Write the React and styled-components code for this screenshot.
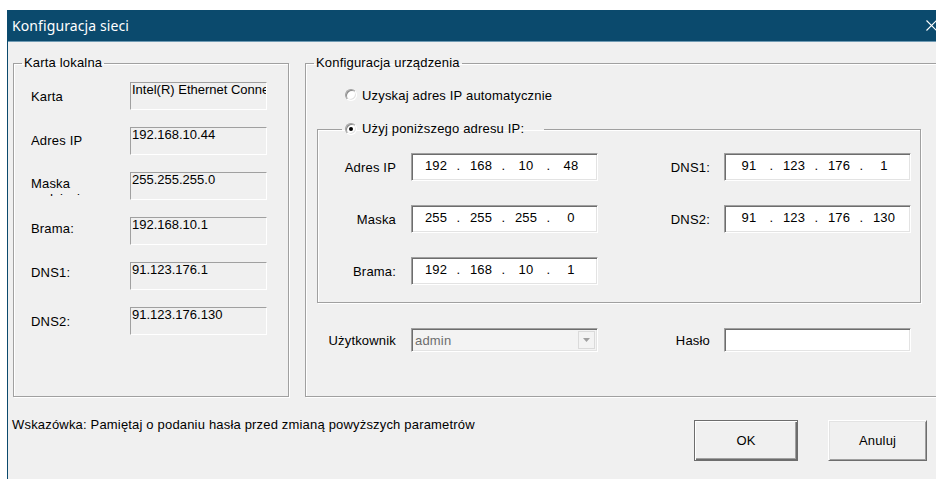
import React from "react";
import styled, { createGlobalStyle } from "styled-components";

const GlobalStyle = createGlobalStyle`
  html, body {
    margin: 0;
    padding: 0;
    background: #ffffff;
    overflow: hidden;
  }
  body {
    font-family: "Liberation Sans", Arial, sans-serif;
    font-size: 13px;
    letter-spacing: 0.18px;
    color: #000;
  }
`;

const Window = styled.div`
  margin: 10px 0 0 7px;
  width: 946px;
  height: 469px;
  border-left: 1px solid #0b4a6d;
  background: #f0f0f0;
  display: flex;
  flex-direction: column;
`;

const TitleBar = styled.div`
  height: 31px;
  flex: none;
  background: #0b4a6d;
  border-bottom: 1px solid #6f9ab3;
  display: flex;
  align-items: center;
  justify-content: space-between;
  padding-left: 4px;
  color: #fff;
`;

const Title = styled.span`
  font-family: "Noto Sans", sans-serif;
  font-size: 14px;
  letter-spacing: 0.1px;
  line-height: 18px;
`;

const CloseButton = styled.div`
  width: 46px;
  height: 31px;
  display: flex;
  align-items: center;
  justify-content: center;
`;

const TopRow = styled.div`
  display: flex;
  gap: 16px;
  padding: 13px 6px 0 5px;
`;

/* etched group frame: grey line with a white highlight beside it */
const GroupBox = styled.fieldset`
  margin: 0;
  padding: 0;
  min-width: 0;
  box-sizing: border-box;
  border: 1px solid #a0a0a0;
  box-shadow: 1px 1px 0 #ffffff, inset 1px 1px 0 #ffffff;
  width: ${(p) => (p.$width ? `${p.$width}px` : "auto")};
  flex: ${(p) => (p.$grow ? "1 1 auto" : "none")};
  margin-left: ${(p) => p.$offset || 0}px;
`;

const Caption = styled.legend`
  margin-left: ${(p) => p.$indent}px;
  padding: 0 ${(p) => p.$padRight}px 0 ${(p) => p.$padLeft}px;
  line-height: 16px;
  display: flex;
  align-items: center;
  gap: 5px;
`;

/* left panel: read-only summary of the local adapter */
const InfoGrid = styled.div`
  display: grid;
  grid-template-columns: 99px 137px;
  grid-auto-rows: 28px;
  row-gap: 17px;
  padding: 11px 0 0 17px;
`;

const InfoLabel = styled.div`
  line-height: 15px;
  margin-top: ${(p) => p.$shift}px;
  height: ${(p) => (p.$clip ? `${p.$clip}px` : "auto")};
  width: 62px;
  overflow: hidden;
`;

const StaticField = styled.div`
  box-sizing: border-box;
  height: 28px;
  background: #f0f0f0;
  border-style: solid;
  border-width: 1px;
  border-color: #a0a0a0 #ffffff #ffffff #a0a0a0;
  padding: 0 0 0 1px;
  line-height: 14px;
  letter-spacing: 0;
  white-space: nowrap;
  overflow: hidden;
`;

/* right panel */
const DeviceBody = styled.div`
  padding: 16px 0 44px 0;
`;

const RadioRow = styled.div`
  display: flex;
  align-items: center;
  gap: 5px;
  height: 16px;
  padding-left: 39px;
  margin-bottom: 18px;
`;

const Radio = styled.span`
  box-sizing: border-box;
  width: 12px;
  height: 12px;
  border-radius: 50%;
  background: #fff;
  border: 1px solid;
  border-color: #a0a0a0 #ffffff #ffffff #a0a0a0;
  box-shadow: inset 1px 1px 0 #8a8a8a, inset -1px -1px 0 #e3e3e3;
  display: inline-flex;
  align-items: center;
  justify-content: center;
  flex: none;

  &::after {
    content: "";
    width: 4px;
    height: 4px;
    border-radius: 50%;
    background: #000;
    display: ${(p) => (p.$checked ? "block" : "none")};
  }
`;

const FormGrid = styled.div`
  display: grid;
  grid-template-columns: 93px 187px 126px 187px;
  grid-auto-rows: ${(p) => p.$rowHeight}px;
  row-gap: 24px;
  padding: ${(p) => p.$pad};
  margin-left: ${(p) => p.$indent || 0}px;
  margin-top: ${(p) => p.$top || 0}px;
`;

const FieldLabel = styled.div`
  display: flex;
  align-items: center;
  justify-content: flex-end;
  padding-right: ${(p) => p.$gap}px;
  padding-top: 1px;
`;

const Sunken = styled.div`
  box-sizing: border-box;
  height: 100%;
  background: ${(p) => (p.$disabled ? "#f3f3f3" : "#ffffff")};
  border-style: solid;
  border-width: 1px;
  border-color: #a0a0a0 #ffffff #ffffff #a0a0a0;
  box-shadow: inset 1px 1px 0 #6d6d6d, inset -1px -1px 0 #e3e3e3;
  display: flex;
  align-items: center;
`;

const IpBox = styled(Sunken)`
  padding: 0 0 3px 4px;
`;

const Octet = styled.span`
  width: 40px;
  text-align: center;
`;

const Dot = styled.span`
  width: 5px;
  text-align: center;
`;

const ComboBox = styled(Sunken)`
  padding-left: 3px;
  color: #6d6d6d;
`;

const DropButton = styled.span`
  margin-left: auto;
  margin-right: 2px;
  width: 17px;
  height: 18px;
  box-sizing: border-box;
  border: 1px solid #dadada;
  background: #f3f3f3;
  display: flex;
  align-items: center;
  justify-content: center;
`;

const Footer = styled.div`
  display: flex;
  align-items: flex-start;
  padding: 0 27px 0 4px;
`;

const Hint = styled.div`
  flex: 1;
  margin-top: 20px;
  line-height: 15px;
`;

const Buttons = styled.div`
  display: flex;
  gap: 30px;
  margin-top: 23px;
`;

const Button = styled.button`
  width: ${(p) => p.$width}px;
  height: 41px;
  padding: 0;
  font-family: inherit;
  font-size: 13px;
  letter-spacing: inherit;
  color: #000;
  background: #f0f0f0;
  border: 1px solid;
  border-color: ${(p) =>
    p.$primary ? "#6d6d6d" : "#ffffff #6d6d6d #6d6d6d #ffffff"};
  box-shadow: ${(p) =>
    p.$primary
      ? "inset 1px 1px 0 #ffffff, inset -1px -1px 0 #6d6d6d, inset -2px -2px 0 #a0a0a0"
      : "inset 1px 1px 0 #e3e3e3, inset -1px -1px 0 #a0a0a0"};
`;

const adapter = [
  { label: "Karta", value: "Intel(R) Ethernet Connection I219-V", shift: 7 },
  { label: "Adres IP", value: "192.168.10.44", shift: 6 },
  { label: "Maska podsieci", value: "255.255.255.0", shift: 4, clip: 20 },
  { label: "Brama:", value: "192.168.10.1", shift: 4 },
  { label: "DNS1:", value: "91.123.176.1", shift: 3 },
  { label: "DNS2:", value: "91.123.176.130", shift: 7 },
];

const rows = [
  ["Adres IP", "192.168.10.48", "DNS1:", "91.123.176.1"],
  ["Maska", "255.255.255.0", "DNS2:", "91.123.176.130"],
  ["Brama:", "192.168.10.1", null, null],
];

function IpField({ value }) {
  const parts = value.split(".");
  return (
    <IpBox>
      {parts.map((p, i) => (
        <React.Fragment key={i}>
          <Octet>{p}</Octet>
          {i < parts.length - 1 && <Dot>.</Dot>}
        </React.Fragment>
      ))}
    </IpBox>
  );
}

export default function App() {
  return (
    <>
      <GlobalStyle />
      <Window>
        <TitleBar>
          <Title>Konfiguracja sieci</Title>
          <CloseButton>
            <svg width="11" height="11" viewBox="0 0 11 11">
              <path d="M0.5 0.5 L10.5 10.5 M10.5 0.5 L0.5 10.5" stroke="#fff" strokeWidth="1.1" />
            </svg>
          </CloseButton>
        </TitleBar>

        <TopRow>
          <GroupBox $width={276}>
            <Caption $indent={8} $padLeft={2} $padRight={2}>Karta lokalna</Caption>
            <InfoGrid>
              {adapter.map((r) => (
                <React.Fragment key={r.label}>
                  <InfoLabel $shift={r.shift} $clip={r.clip}>{r.label}</InfoLabel>
                  <StaticField>{r.value}</StaticField>
                </React.Fragment>
              ))}
            </InfoGrid>
          </GroupBox>

          <GroupBox $grow>
            <Caption $indent={8} $padLeft={2} $padRight={2}>Konfiguracja urządzenia</Caption>
            <DeviceBody>
              <RadioRow>
                <Radio />
                <span>Uzyskaj adres IP automatycznie</span>
              </RadioRow>

              <GroupBox $width={604} $offset={11}>
                <Caption $indent={24} $padLeft={3} $padRight={20}>
                  <Radio $checked />
                  <span>Użyj poniższego adresu IP:</span>
                </Caption>
                <FormGrid $rowHeight={28} $pad="16px 0 17px 0">
                  {rows.map(([l1, v1, l2, v2]) => (
                    <React.Fragment key={l1}>
                      <FieldLabel $gap={15}>{l1}</FieldLabel>
                      <IpField value={v1} />
                      {l2 ? <FieldLabel $gap={14}>{l2}</FieldLabel> : <span />}
                      {v2 ? <IpField value={v2} /> : <span />}
                    </React.Fragment>
                  ))}
                </FormGrid>
              </GroupBox>

              <FormGrid $rowHeight={24} $pad="0" $indent={12} $top={25}>
                <FieldLabel $gap={15}>Użytkownik</FieldLabel>
                <ComboBox $disabled>
                  admin
                  <DropButton>
                    <svg width="7" height="4" viewBox="0 0 7 4">
                      <path d="M0 0 H7 L3.5 4 Z" fill="#a0a0a0" />
                    </svg>
                  </DropButton>
                </ComboBox>
                <FieldLabel $gap={14}>Hasło</FieldLabel>
                <Sunken />
              </FormGrid>
            </DeviceBody>
          </GroupBox>
        </TopRow>

        <Footer>
          <Hint>Wskazówka: Pamiętaj o podaniu hasła przed zmianą powyższych parametrów</Hint>
          <Buttons>
            <Button $width={104} $primary>OK</Button>
            <Button $width={99}>Anuluj</Button>
          </Buttons>
        </Footer>
      </Window>
    </>
  );
}
